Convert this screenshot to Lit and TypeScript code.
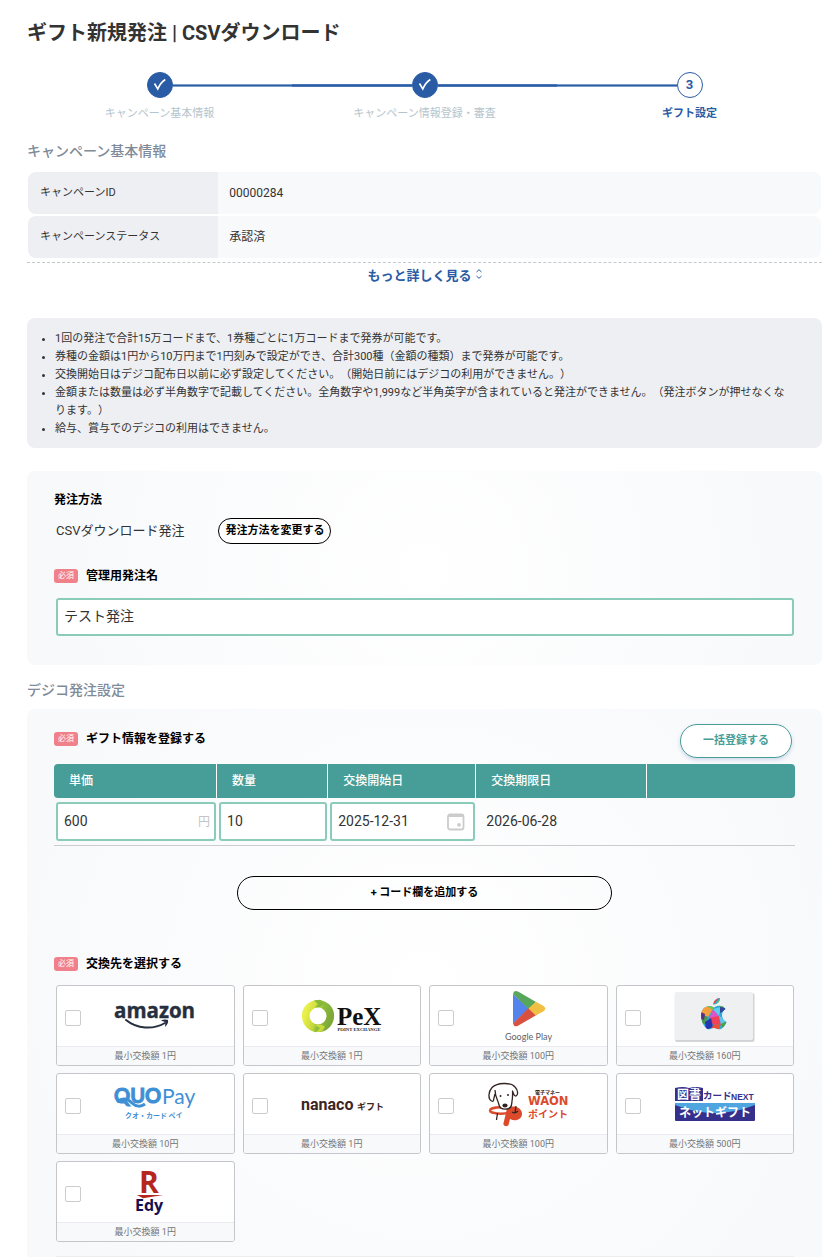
import { LitElement, html, css, nothing, type TemplateResult } from "lit";
import { customElement, property } from "lit/decorators.js";

interface Partner {
  id: string;
  name: string;
  min: string;
}

const PARTNERS: Partner[] = [
  { id: "amazon", name: "amazon", min: "1円" },
  { id: "pex", name: "PeX", min: "1円" },
  { id: "gplay", name: "Google Play", min: "100円" },
  { id: "apple", name: "Apple", min: "160円" },
  { id: "quo", name: "QUOPay", min: "10円" },
  { id: "nanaco", name: "nanaco", min: "1円" },
  { id: "waon", name: "WAON", min: "100円" },
  { id: "tosho", name: "NEXT", min: "500円" },
  { id: "edy", name: "Edy", min: "1円" },
];

const LOGOS: Record<string, TemplateResult> = {
  amazon: html`<svg class="logo" viewBox="0 0 80 54">
    <text class="os" x="-1" y="29" font-size="20.5" fill="#252f3e" stroke="#252f3e" stroke-width="0.4">amazon</text>
    <path d="M11 31 C22 40 38 41 50 34" fill="none" stroke="#252f3e" stroke-width="2" stroke-linecap="round" />
    <path d="M46 31.5 C49 30 52 30.2 53 31 C53.5 33 52.5 36 50 38 L50.5 33.2 Z" fill="#252f3e" />
  </svg>`,
  pex: html`<svg class="logo" viewBox="0 0 80 54">
    <defs>
      <linearGradient id="ring" x1="0" y1="0.3" x2="1" y2="0.6">
        <stop offset="0" stop-color="#eaf04a" />
        <stop offset="0.45" stop-color="#c3d63c" />
        <stop offset="0.6" stop-color="#8dbf3a" />
        <stop offset="1" stop-color="#7fa83a" />
      </linearGradient>
    </defs>
    <circle cx="16" cy="27" r="12.3" fill="none" stroke="url(#ring)" stroke-width="7.6" />
    <path d="M12 11.5 L18 10.8 L23 14 L18 18 L13 18.5 L16 15 Z" fill="#86b83a" />
    <path d="M13 36 L19 35.5 L23 37.5 L20 42.5 L14 43.2 L18 39 Z" fill="#c9d93e" />
    <text class="serif" x="35" y="36" font-size="25" fill="#111">PeX</text>
    <text class="serif" x="35.5" y="42" font-size="4.7" fill="#222">POINT EXCHANGE</text>
  </svg>`,
  gplay: html`<svg class="logo" viewBox="0 0 80 54">
    <path d="M25 5 L41 19.5 L25 34.5 Z" fill="#5383ec" />
    <path d="M25 5 Q26 0.5 30 2.5 L48 13 L40.5 20 Z" fill="#58a65c" />
    <path d="M25 34.5 Q26 38.5 30 36.8 L48 26.3 L40.5 19 Z" fill="#d8513f" />
    <path d="M48 12.8 L55.5 17 Q59 19.6 55.5 22.2 L48 26.5 L40.5 19.6 Z" fill="#f1bf42" />
    <text class="play" x="17" y="51" font-size="9" fill="#5f6368">Google Play</text>
  </svg>`,
  apple: html`<svg class="logo" viewBox="0 0 80 54">
    <defs>
      <clipPath id="fruit">
        <path
          d="M39 18.5 C43 15.5 48 16.5 50.5 20 C45.5 23 46 30.5 51.5 33 C50 37 47 40.5 44 40.3 C41.5 39.7 40.5 38.6 38.5 39 C36 39.5 35 41 32.5 40 C28 37.5 25.5 30 26.3 24.5 C27.2 17.5 34 15.5 39 18.5 Z M38.5 15.5 C38.3 12 41.5 9.2 45 9 C45.2 12.5 42.5 15.6 38.5 15.5 Z"
        />
      </clipPath>
    </defs>
    <rect x="0" y="4" width="79.5" height="49" rx="2" fill="#d3d4d6" />
    <rect x="-0.5" y="3" width="78.5" height="48" rx="2" fill="#eff0f2" />
    <g clip-path="url(#fruit)">
      <rect x="24" y="7" width="30" height="36" fill="#2fa8d8" />
      <path d="M24 24 L30 16 L38 20 L33 28 Z" fill="#f6a03a" />
      <path d="M24 24 L33 28 L30 35 L24 34 Z" fill="#4a9b45" />
      <path d="M26 23 L30 25 L29 31 L26 30 Z" fill="#5a2f86" />
      <path d="M30 16 L40 15 L38 21 Z" fill="#70c04a" />
      <path d="M38 20 L44 27 L34 30 Z" fill="#e052c8" />
      <path d="M38 20 L46 18 L44 27 Z" fill="#5ad0ee" />
      <path d="M44 15 L54 16 L46 20 Z" fill="#52b04a" />
      <path d="M45 18 L54 19 L45 24 Z" fill="#34459c" />
      <path d="M34 29 L44 27 L46 35 L38 36 Z" fill="#f0405a" />
      <path d="M44 27 L54 32 L46 36 Z" fill="#5fc4ee" />
      <path d="M30 33 L36 29 L38 38 L31 41 Z" fill="#2436b4" />
      <path d="M38 36 L46 35 L43 42 L36 42 Z" fill="#ee4f30" />
      <path d="M46 35 L52 32 L48 40 Z" fill="#46a14a" />
      <path d="M38 16 L45 8 L41 9 L38 12 Z" fill="#e94c36" />
      <path d="M41 15 L46 9 L45 14 Z" fill="#7cc243" />
    </g>
  </svg>`,
  quo: html`<svg class="logo" viewBox="0 0 80 54">
    <text class="lato" x="-1" y="26" font-size="20" fill="#3f8fd6" stroke="#3f8fd6" stroke-width="1">QUO</text>
    <path d="M2 25 C8 20 13 22 17 26 C21 30 26 30 30 27" fill="none" stroke="#3f8fd6" stroke-width="3" />
    <text class="latolight" x="47" y="27" font-size="21" fill="#3f8fd6">Pay</text>
    <text class="jpb" x="10" y="41" font-size="7" fill="#3f8fd6">クオ・カード ペイ</text>
  </svg>`,
  nanaco: html`<svg class="logo" viewBox="0 0 80 54">
    <text class="cond" x="-1" y="33" font-size="16" fill="#3c2522">nanaco</text>
    <text class="jpb" x="55" y="33" font-size="9" fill="#3c2522">ギフト</text>
  </svg>`,
  waon: html`<svg class="logo" viewBox="0 0 80 54">
    <ellipse cx="13" cy="33.5" rx="11" ry="3.2" fill="none" stroke="#dc4a2c" stroke-width="2.4" />
    <path
      d="M19 31 C24 28 33 29 34 36 C34.5 42 28 45 22 42 L20.5 48 C19.5 50 14.5 49.5 15.5 46 L17.5 38 Z"
      fill="#dc4a2c"
    />
    <path
      d="M7 17 C5 24 6 25 3.5 24 C0 22 0 15 4 10.5 C9 5.5 23 5 27 10 C30 13 30.5 18 28 19 C25.5 19.5 25.5 16 24.5 14 C25 20 24 24 23.5 28 C22.5 33 12.5 34 11 28 C10.5 24 7 20 7 13"
      fill="#fff"
      stroke="#332422"
      stroke-width="1.3"
      stroke-linejoin="round"
    />
    <circle cx="12.5" cy="19" r="1" fill="#332422" />
    <circle cx="20" cy="18" r="1" fill="#332422" />
    <ellipse cx="17" cy="28.5" rx="2.6" ry="2" fill="#332422" />
    <path d="M9.5 36 L8.5 43 M24 35 Q27 37 30 34 M28 29 L27 36" fill="none" stroke="#332422" stroke-width="1.3" />
    <text class="jpb" x="47" y="17" font-size="5" fill="#332422">電子マネー</text>
    <text class="djv" x="40" y="28" font-size="11.5" fill="#dc4a2c">WAON</text>
    <text class="jpb" x="40" y="41" font-size="10" fill="#dc4a2c">ポイント</text>
  </svg>`,
  tosho: html`<svg class="logo" viewBox="0 0 80 54">
    <path d="M0 11 Q8 9 14 11 Q21 9 28 11 V24 H0 Z" fill="#35308c" />
    <text class="jpb" x="2" y="22" font-size="12" fill="#fff">図書</text>
    <text class="jpb" x="28" y="22" font-size="9.5" fill="#35308c">カード</text>
    <text class="sansb" x="56" y="23" font-size="8.5" fill="#35308c">NEXT</text>
    <rect x="0" y="26" width="80" height="18" rx="1" fill="#35308c" />
    <path d="M0 26 H80 V28 Q40 44 0 28 Z" fill="#4ea5e0" />
    <text class="jpb" x="4" y="40" font-size="12" fill="#fff">ネットギフト</text>
  </svg>`,
  edy: html`<svg class="logo" viewBox="0 0 80 54">
    <text class="os" x="24" y="28" font-size="30" fill="#b5271e">R</text>
    <path d="M22 30 H48 L28 33.2 Z" fill="#b5271e" />
    <text class="os" x="20" y="46" font-size="16" fill="#170f4e">Edy</text>
  </svg>`,
};

@customElement("step-item")
class StepItem extends LitElement {
  @property() label = "";
  @property() number = "";
  @property({ type: Boolean }) done = false;

  static styles = css`
    :host {
      display: flex;
      flex: 1;
      flex-direction: column;
      align-items: center;
      gap: 6px;
    }
    .rail {
      display: flex;
      align-items: center;
      width: 100%;
    }
    .line {
      flex: 1;
      height: 1px;
      border: solid #7f9fcb;
      border-width: 1px 0;
      background: #2a5ba5;
    }
    :host(.first) .before,
    :host(.last) .after {
      visibility: hidden;
    }
    :host(.middle) .line {
      border-color: #4a75b4;
    }
    .dot {
      display: flex;
      align-items: center;
      justify-content: center;
      box-sizing: border-box;
      width: 26px;
      height: 26px;
      border: 1px solid #2a5ba5;
      border-radius: 50%;
      color: #2a5ba5;
      font-size: 13px;
      font-weight: 700;
    }
    .dot.done {
      background: #2a5ba5;
    }
    .label {
      font-size: 11px;
      line-height: 20px;
      color: #b5c5cd;
    }
    .label.current {
      color: #2a5ba5;
      font-weight: 700;
    }
  `;

  render() {
    return html`
      <div class="rail">
        <span class="line before"></span>
        <span class="dot ${this.done ? "done" : ""}">
          ${this.done
            ? html`<svg width="14" height="14" viewBox="0 0 14 14">
                <path d="M1.5 5.5 L4.8 11 Q7.5 4.5 12.3 1.5" fill="none" stroke="#fff" stroke-width="1.6" />
              </svg>`
            : this.number}
        </span>
        <span class="line after"></span>
      </div>
      <span class="label ${this.done ? "" : "current"}">${this.label}</span>
    `;
  }
}

@customElement("partner-card")
class PartnerCard extends LitElement {
  @property({ attribute: false }) partner!: Partner;

  static styles = css`
    :host {
      display: block;
    }
    .card {
      display: flex;
      flex-direction: column;
      box-sizing: border-box;
      height: 81px;
      border: 1px solid #c4c6c9;
      border-radius: 3px;
      background: #fff;
      overflow: hidden;
    }
    .top {
      display: flex;
      flex: 1;
      align-items: center;
      padding-left: 8px;
    }
    .tick {
      appearance: none;
      box-sizing: border-box;
      flex: none;
      width: 16px;
      height: 16px;
      margin: 4px 0 0;
      border: 1px solid #ccc;
      border-radius: 2px;
      background: #fff;
    }
    .tick:checked {
      background: #479e98;
    }
    .art {
      display: flex;
      flex: 1;
      justify-content: center;
      padding-right: 4px;
    }
    .logo {
      display: block;
      width: 80px;
      height: 54px;
      overflow: visible;
    }
    .foot {
      padding-top: 1px;
      border-top: 1px solid #e9ebee;
      background: #f7f9fb;
      color: #757575;
      font-size: 9px;
      line-height: 17px;
      text-align: center;
    }
    .os {
      font-family: "Open Sans", sans-serif;
      font-weight: 700;
    }
    .serif {
      font-family: "Liberation Serif", serif;
      font-weight: 700;
    }
    .play {
      font-family: Lato, sans-serif;
    }
    .lato {
      font-family: Lato, sans-serif;
      font-weight: 700;
    }
    .latolight {
      font-family: Lato, sans-serif;
      font-weight: 400;
    }
    .cond {
      font-family: Roboto, sans-serif;
      font-weight: 700;
    }
    .djv {
      font-family: "DejaVu Sans", sans-serif;
      font-weight: 700;
    }
    .sansb {
      font-family: "Liberation Sans", sans-serif;
      font-weight: 700;
    }
    .jpb {
      font-family: "Noto Sans CJK JP", sans-serif;
      font-weight: 700;
    }
  `;

  render() {
    return html`<label class="card">
      <span class="top">
        <input class="tick" type="checkbox" name="partner" aria-label=${this.partner.name} />
        <span class="art">${LOGOS[this.partner.id]}</span>
      </span>
      <span class="foot">最小交換額 ${this.partner.min}</span>
    </label>`;
  }
}

@customElement("app-root")
class AppRoot extends LitElement {
  static styles = css`
    :host {
      display: block;
      box-sizing: border-box;
      padding: 18px 18px 0 27px;
      background: #fff;
      color: #333;
      font-family: Roboto, "Noto Sans CJK JP", sans-serif;
      font-size: 12px;
      line-height: 20px;
    }
    h1,
    h2,
    h3 {
      margin: 0;
    }
    h1 {
      font-size: 20px;
      line-height: 30px;
      font-weight: 700;
    }
    h2 {
      color: #808b99;
      font-size: 14px;
      font-weight: 500;
    }
    h3,
    .field {
      color: #000;
      font-size: 12px;
      font-weight: 700;
    }
    button {
      font: inherit;
      cursor: pointer;
    }
    .steps {
      display: flex;
      margin: 24px 0 17px;
    }
    .info {
      width: calc(100% - 2px);
      margin: 9px 1px 2px;
      border-spacing: 0 2px;
    }
    .info th,
    .info td {
      height: 42px;
      box-sizing: border-box;
      padding: 0 11px 1px;
      text-align: left;
    }
    .info th {
      width: 24%;
      padding-left: 12px;
      border-radius: 8px 0 0 8px;
      background: #eeeff3;
      font-size: 11px;
      font-weight: 400;
    }
    .info td {
      border-radius: 0 8px 8px 0;
      background: #f8f9fb;
    }
    .more {
      display: flex;
      justify-content: center;
      padding-top: 3px;
      border-top: 1px dashed #c6c8ca;
    }
    .morebtn {
      display: flex;
      gap: 4px;
      padding: 0;
      border: 0;
      background: none;
      color: #2a5ba5;
      font-size: 13px;
      font-weight: 700;
    }
    .updown {
      margin-top: 3px;
    }
    .notes {
      margin: 32px 0 23px;
      padding: 12px 32px 10px 28px;
      border-radius: 8px;
      background: #eeeff3;
      font-size: 11px;
      line-height: 18px;
      text-spacing-trim: space-all;
    }
    .panel {
      padding: 19px 27px 29px;
      border-radius: 8px;
      background: radial-gradient(circle at center, #fff 0%, #f8f9fb 90%);
    }
    .method {
      display: flex;
      align-items: center;
      gap: 34px;
      margin: 8px 0 22px 2px;
      font-size: 13px;
    }
    .pill {
      box-sizing: border-box;
      border: 1px solid #000;
      border-radius: 17px;
      background: #fff;
      color: #000;
      font-size: 11px;
      font-weight: 700;
    }
    .change {
      height: 26px;
      padding: 0 6px;
      line-height: 24px;
    }
    .field {
      display: flex;
      align-items: center;
      gap: 8px;
    }
    .badge {
      padding: 0 4px;
      border-radius: 3px;
      background: #f0808a;
      color: #fff;
      font-size: 8px;
      font-weight: 400;
      line-height: 14px;
    }
    .box {
      display: block;
      box-sizing: border-box;
      width: 100%;
      height: 39px;
      padding: 0 6px 2px;
      border: 2px solid #8accb9;
      border-radius: 3px;
      outline: 0;
      background: #fff;
      color: #333;
      font: inherit;
      font-size: 14px;
    }
    .name {
      margin: 12px 1px 0 2px;
      width: calc(100% - 3px);
      height: 38px;
      padding-bottom: 4px;
    }
    .second {
      margin-top: 15px;
    }
    .order {
      margin-top: 9px;
      padding: 15px 27px 0;
      border-radius: 8px 8px 0 0;
    }
    .bar {
      display: flex;
      align-items: flex-start;
      justify-content: space-between;
      padding-right: 3px;
      margin-bottom: 6px;
    }
    .bar .field {
      line-height: 30px;
    }
    .bulk {
      height: 34px;
      padding: 0 22px;
      border-color: #479e98;
      color: #479e98;
      box-shadow: 0 2px 4px #cfd8ea;
    }
    .gifts {
      width: 100%;
      border-spacing: 0;
      table-layout: fixed;
    }
    .gifts th {
      height: 34px;
      padding: 0 0 0 15px;
      border-right: 1px solid #fff;
      background: #479e98;
      color: #fff;
      font-weight: 500;
      text-align: left;
    }
    .gifts th:first-child {
      border-radius: 4px 0 0 4px;
    }
    .gifts th:last-child {
      border-right: 0;
      border-radius: 0 4px 4px 0;
    }
    .gifts td {
      padding: 4px 1px 4px 2px;
      border-bottom: 1px solid #cbccd0;
      font-size: 14px;
    }
    .gifts .plain {
      padding: 0 0 1px 10px;
    }
    .c1 {
      width: 22%;
    }
    .c2 {
      width: 15%;
    }
    .c3,
    .c5 {
      width: 20%;
    }
    .c4 {
      width: 23%;
    }
    .cell {
      display: grid;
      align-items: center;
    }
    .cell > * {
      grid-area: 1 / 1;
    }
    .unit {
      justify-self: end;
      margin-right: 6px;
      color: #c4c4c4;
      font-size: 12px;
    }
    .cal {
      justify-self: end;
      margin-right: 10px;
    }
    .add {
      display: block;
      width: calc(51% - 3px);
      height: 34px;
      margin: 30px auto 44px;
      background: none;
    }
    .cards {
      display: grid;
      grid-template-columns: repeat(4, 1fr);
      gap: 7px 8px;
      margin: 11px 1px 14px 2px;
    }
    .rule {
      height: 1px;
      margin: 0 1px 0 2px;
      border: 0;
      background: #eceef0;
    }
  `;

  private badge() {
    return html`<span class="badge">必須</span>`;
  }

  render() {
    return html`
      <h1>ギフト新規発注 | CSVダウンロード</h1>
      <div class="steps">
        <step-item class="first" done label="キャンペーン基本情報"></step-item>
        <step-item class="middle" done label="キャンペーン情報登録・審査"></step-item>
        <step-item class="last" number="3" label="ギフト設定"></step-item>
      </div>

      <h2>キャンペーン基本情報</h2>
      <table class="info">
        <tr>
          <th scope="row">キャンペーンID</th>
          <td>00000284</td>
        </tr>
        <tr>
          <th scope="row">キャンペーンステータス</th>
          <td>承認済</td>
        </tr>
      </table>
      <div class="more">
        <button class="morebtn" type="button">
          もっと詳しく見る
          <svg class="updown" width="6" height="10" viewBox="0 0 6 10">
            <path d="M0.5 3 L3 0.7 L5.5 3 M0.5 7 L3 9.3 L5.5 7" fill="none" stroke="#2a5ba5" />
          </svg>
        </button>
      </div>

      <ul class="notes">
        <li>1回の発注で合計15万コードまで、1券種ごとに1万コードまで発券が可能です。</li>
        <li>券種の金額は1円から10万円まで1円刻みで設定ができ、合計300種（金額の種類）まで発券が可能です。</li>
        <li>交換開始日はデジコ配布日以前に必ず設定してください。（開始日前にはデジコの利用ができません。）</li>
        <li>
          金額または数量は必ず半角数字で記載してください。全角数字や1,999など半角英字が含まれていると発注ができません。（発注ボタンが押せなくなります。）
        </li>
        <li>給与、賞与でのデジコの利用はできません。</li>
      </ul>

      <section class="panel">
        <h3>発注方法</h3>
        <div class="method">
          <span>CSVダウンロード発注</span>
          <button class="pill change" type="button">発注方法を変更する</button>
        </div>
        <label class="field" for="order-name">${this.badge()}管理用発注名</label>
        <input class="box name" id="order-name" type="text" .value=${"テスト発注"} />
      </section>

      <h2 class="second">デジコ発注設定</h2>
      <section class="panel order">
        <div class="bar">
          <h3 class="field">${this.badge()}ギフト情報を登録する</h3>
          <button class="pill bulk" type="button">一括登録する</button>
        </div>
        <table class="gifts">
          <colgroup>
            <col class="c1" />
            <col class="c2" />
            <col class="c3" />
            <col class="c4" />
            <col class="c5" />
          </colgroup>
          <thead>
            <tr>
              <th id="h-price">単価</th>
              <th id="h-count">数量</th>
              <th id="h-start">交換開始日</th>
              <th>交換期限日</th>
              <th></th>
            </tr>
          </thead>
          <tbody>
            <tr>
              <td>
                <div class="cell">
                  <input class="box" type="text" inputmode="numeric" aria-labelledby="h-price" .value=${"600"} />
                  <span class="unit">円</span>
                </div>
              </td>
              <td><input class="box" type="text" inputmode="numeric" aria-labelledby="h-count" .value=${"10"} /></td>
              <td>
                <div class="cell">
                  <input class="box" type="text" aria-labelledby="h-start" .value=${"2025-12-31"} />
                  <svg class="cal" width="18" height="18" viewBox="0 0 18 18">
                    <rect x="1" y="1.5" width="15.5" height="15" rx="2" fill="none" stroke="#ccc" stroke-width="1.8" />
                    <path d="M1 1.5 H16.5 V4 H1 Z" fill="#ccc" />
                    <circle cx="12" cy="11.8" r="1.9" fill="#ccc" />
                  </svg>
                </div>
              </td>
              <td class="plain">2026-06-28</td>
              <td>${nothing}</td>
            </tr>
          </tbody>
        </table>
        <button class="pill add" type="button">+ コード欄を追加する</button>
        <h3 class="field">${this.badge()}交換先を選択する</h3>
        <div class="cards">${PARTNERS.map((p) => html`<partner-card .partner=${p}></partner-card>`)}</div>
        <hr class="rule" />
      </section>
    `;
  }
}
